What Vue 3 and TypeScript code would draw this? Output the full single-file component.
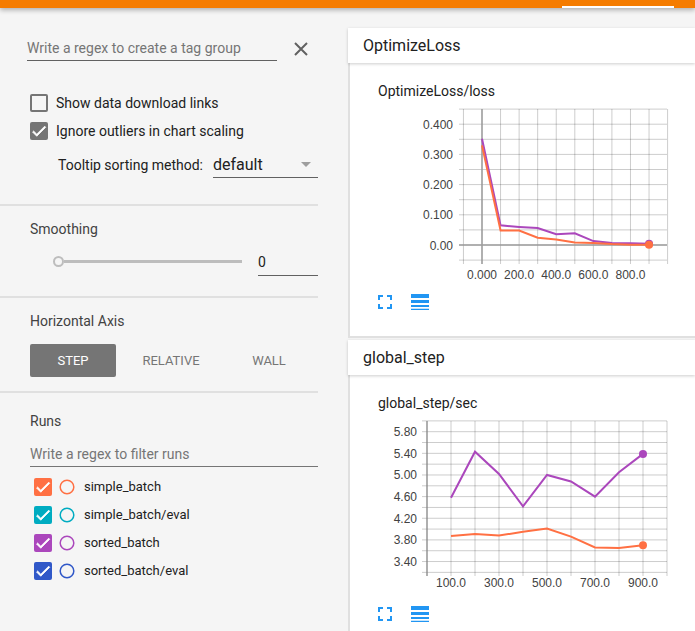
<script setup lang="ts">
interface Series { color: string; values: number[] }
interface Chart {
  x0: number; xStep: number; xFirst: number; xLabelY: number
  y0: number; yUnit: number; yFirst: number; yCount: number; yDelta: number; yZero: number
  gridLeft: number; tickBottom: number; labelRight: number; stepStart: number; dot: number
  xLabel: (step: number) => string
  yLabel: (v: number) => string
  series: Series[]
}

const tab = 'STEP'
const tabs = ['STEP', 'RELATIVE', 'WALL']
const runs = [
  { name: 'simple_batch', color: '#ff7043' },
  { name: 'simple_batch/eval', color: '#00acc1' },
  { name: 'sorted_batch', color: '#ab47bc' },
  { name: 'sorted_batch/eval', color: '#3058c8' },
]

const lossChart: Chart = {
  x0: 72, xStep: 18.56, xFirst: -100, xLabelY: 174,
  y0: 140, yUnit: 302, yFirst: -0.05, yCount: 11, yDelta: 0.05, yZero: 0,
  gridLeft: 49, tickBottom: 159, labelRight: 43, stepStart: 0, dot: 4,
  xLabel: s => (s < 0 || s > 800 || s % 200 !== 0 ? '' : s === 0 ? '0.000' : s.toFixed(1)),
  yLabel: v => {
    const n = Math.round(v * 100)
    if (n < 0 || n > 40 || n % 10 !== 0) return ''
    return n === 0 ? '0.00' : (n / 100).toFixed(3)
  },
  series: [
    { color: '#ab47bc', values: [0.352, 0.065, 0.06, 0.056, 0.036, 0.039, 0.013, 0.007, 0.006, 0.004] },
    { color: '#ff7043', values: [0.33, 0.048, 0.048, 0.024, 0.018, 0.008, 0.007, 0.003, 0.001, 0.001] },
  ],
}

const stepChart: Chart = {
  x0: 17, xStep: 24, xFirst: 0, xLabelY: 170,
  y0: 14.7, yUnit: 54.1, yFirst: 3.2, yCount: 15, yDelta: 0.2, yZero: 5.8,
  gridLeft: 12, tickBottom: 159, labelRight: 7, stepStart: 100, dot: 4,
  xLabel: s => (s % 200 === 100 ? s.toFixed(1) : ''),
  yLabel: v => (Math.round(v * 10) % 4 === 2 ? v.toFixed(2) : ''),
  series: [
    { color: '#ab47bc', values: [4.58, 5.43, 5.02, 4.42, 5.0, 4.88, 4.6, 5.05, 5.39] },
    { color: '#ff7043', values: [3.87, 3.91, 3.88, 3.95, 4.01, 3.86, 3.66, 3.65, 3.7] },
  ],
}

const sections = [
  { name: 'OptimizeLoss', title: 'OptimizeLoss/loss', chart: lossChart, zeroAxis: true },
  { name: 'global_step', title: 'global_step/sec', chart: stepChart, zeroAxis: false },
]

function px(c: Chart, step: number) {
  return c.x0 + (step / 100) * c.xStep
}
function py(c: Chart, v: number) {
  return c.y0 - (v - c.yZero) * c.yUnit
}
function xTicks(c: Chart) {
  const out: number[] = []
  for (let s = c.xFirst; s <= 1000; s += 100) out.push(s)
  return out
}
function yTicks(c: Chart) {
  return Array.from({ length: c.yCount }, (_, i) => c.yFirst + i * c.yDelta)
}
function line(c: Chart, s: Series) {
  return s.values.map((v, i) => `${px(c, c.stepStart + i * 100)},${py(c, v)}`).join(' ')
}
function lastX(c: Chart, s: Series) {
  return px(c, c.stepStart + (s.values.length - 1) * 100)
}
function lastY(c: Chart, s: Series) {
  return py(c, s.values[s.values.length - 1])
}
</script>

<template>
  <div class="page">
    <header class="topbar"><span class="tab-mark"></span></header>
    <div class="body">
      <aside class="sidebar">
        <section class="side-top">
          <div class="tag-row">
            <div class="tag-input">Write a regex to create a tag group</div>
            <svg class="close" width="14" height="14" viewBox="0 0 14 14">
              <path d="M1 1L13 13M13 1L1 13" stroke="#616161" stroke-width="2" fill="none" />
            </svg>
          </div>
          <label class="check-row first">
            <span class="box"></span>
            <span>Show data download links</span>
          </label>
          <label class="check-row">
            <span class="box on">
              <svg width="18" height="18" viewBox="0 0 24 24"><path d="M9 16.17L4.83 12l-1.42 1.41L9 19 21 7l-1.41-1.41z" fill="#fff" stroke="#fff" /></svg>
            </span>
            <span>Ignore outliers in chart scaling</span>
          </label>
          <div class="sort-row">
            <span>Tooltip sorting method:</span>
            <div class="select">default<i class="caret"></i></div>
          </div>
        </section>

        <section class="side-smooth">
          <h3>Smoothing</h3>
          <div class="slider-row">
            <div class="slider"><span class="thumb"></span><span class="track"></span></div>
            <div class="slider-value">0</div>
          </div>
        </section>

        <section class="side-axis">
          <h3>Horizontal Axis</h3>
          <div class="axis-tabs">
            <button v-for="t in tabs" :key="t" :class="{ active: t === tab }">{{ t }}</button>
          </div>
        </section>

        <section class="side-runs">
          <h3>Runs</h3>
          <div class="run-filter">Write a regex to filter runs</div>
          <div v-for="r in runs" :key="r.name" class="run">
            <span class="run-box" :style="{ background: r.color }">
              <svg width="18" height="18" viewBox="0 0 24 24"><path d="M9 16.17L4.83 12l-1.42 1.41L9 19 21 7l-1.41-1.41z" fill="#fff" stroke="#fff" /></svg>
            </span>
            <svg class="run-dot" width="16" height="16" viewBox="0 0 16 16">
              <circle cx="8" cy="8" r="6.8" fill="none" :stroke="r.color" stroke-width="1.5" />
            </svg>
            <span class="run-name">{{ r.name }}</span>
          </div>
        </section>
      </aside>

      <main class="main">
        <section v-for="s in sections" :key="s.name" class="group">
          <div class="group-head">{{ s.name }}</div>
          <div class="card">
            <div class="card-title">{{ s.title }}</div>
            <svg class="chart" width="270" height="182" viewBox="0 0 270 182">
              <g stroke="#000" stroke-opacity="0.2" fill="none">
                <line v-for="t in xTicks(s.chart)" :key="t" :x1="px(s.chart, t)" :x2="px(s.chart, t)" y1="4" :y2="s.chart.tickBottom" />
                <line v-for="v in yTicks(s.chart)" :key="v" :x1="s.chart.gridLeft" x2="257" :y1="py(s.chart, v)" :y2="py(s.chart, v)" />
              </g>
              <g v-if="s.zeroAxis" stroke="#9e9e9e" stroke-width="1.5">
                <line :x1="px(s.chart, 0)" :x2="px(s.chart, 0)" y1="4" :y2="s.chart.tickBottom" />
                <line :x1="s.chart.gridLeft" x2="257" :y1="py(s.chart, 0)" :y2="py(s.chart, 0)" />
              </g>
              <line v-else :x1="px(s.chart, 0)" :x2="px(s.chart, 0)" y1="4" :y2="s.chart.tickBottom" stroke="#8a8a8a" stroke-width="1.2" />
              <g class="labels">
                <text v-for="v in yTicks(s.chart)" :key="v" :x="s.chart.labelRight" :y="py(s.chart, v) + 4.5" text-anchor="end">{{ s.chart.yLabel(v) }}</text>
                <text v-for="t in xTicks(s.chart)" :key="t" :x="px(s.chart, t)" :y="s.chart.xLabelY" text-anchor="middle">{{ s.chart.xLabel(t) }}</text>
              </g>
              <g v-for="r in s.chart.series" :key="r.color">
                <polyline :points="line(s.chart, r)" fill="none" :stroke="r.color" stroke-width="2" />
                <circle :cx="lastX(s.chart, r)" :cy="lastY(s.chart, r)" :r="s.chart.dot" :fill="r.color" />
              </g>
            </svg>
            <div class="tools">
              <svg width="24" height="24" viewBox="0 0 24 24">
                <path d="M7 14H5v5h5v-2H7v-3zm-2-4h2V7h3V5H5v5zm12 7h-3v2h5v-5h-2v3zM14 5v2h3v3h2V5h-5z" fill="#2196f3" />
              </svg>
              <svg class="list" width="18" height="16" viewBox="0 0 18 16">
                <path d="M0 0h18v4H0zM0 6h18v3H0zM0 11h18v2H0zM0 14.7h18V16H0z" fill="#2196f3" />
              </svg>
            </div>
          </div>
        </section>
      </main>
    </div>
  </div>
</template>

<style>
html, body { margin: 0; height: 100%; overflow: hidden; background: #f5f5f5; }
</style>

<style scoped>
.page { height: 631px; overflow: hidden; display: flex; flex-direction: column; font-family: Roboto, "Noto Sans", sans-serif; color: #212121; font-size: 14px; }
.topbar { position: relative; z-index: 2; flex: none; height: 8px; background: #f57c00; box-shadow: 0 2px 5px rgba(0, 0, 0, 0.3); }
.tab-mark { position: absolute; left: 562px; width: 112px; top: 6px; height: 2px; background: #fff; }
.body { flex: 1; display: flex; min-height: 0; }

.sidebar { flex: none; width: 348px; background: #f5f5f5; display: flex; flex-direction: column; }
.sidebar section { margin-right: 30px; border-bottom: 2px solid #e0e0e0; box-sizing: border-box; }
.sidebar h3 { margin: 0; font-size: 14px; font-weight: 400; color: #424242; line-height: 18px; padding-left: 30px; }

.side-top { height: 198px; }
.tag-row { display: flex; align-items: center; padding: 28px 0 0 27px; }
.tag-input { width: 250px; height: 24px; line-height: 24px; border-bottom: 1px solid #616161; color: #757575; font-size: 14px; box-sizing: content-box; }
.close { margin: 0 0 0 17px; }
.check-row { display: flex; align-items: center; gap: 8px; padding-left: 30px; height: 18px; margin-top: 10px; color: #212121; }
.check-row.first { margin-top: 33px; }
.box { width: 18px; height: 18px; box-sizing: border-box; border: 2px solid #757575; border-radius: 2px; display: block; }
.box.on { border: none; background: #757575; }
.box svg { display: block; }
.sort-row { display: flex; align-items: flex-end; padding: 10px 0 0 58px; color: #212121; }
.sort-row > span { line-height: 26px; }
.select { position: relative; width: 105px; height: 27px; margin-left: 10px; border-bottom: 1px solid #616161; font-size: 16px; line-height: 30px; }
.caret { position: absolute; right: 7px; top: 12px; border: 5px solid transparent; border-bottom: none; border-top-color: #9e9e9e; }

.side-smooth { height: 92px; padding-top: 14px; }
.slider-row { display: flex; align-items: flex-end; padding-left: 53px; margin-top: 8px; }
.slider { position: relative; width: 189px; height: 30px; display: flex; align-items: center; }
.thumb { width: 11px; height: 11px; box-sizing: border-box; border: 2px solid #bdbdbd; border-radius: 50%; flex: none; }
.track { flex: 1; height: 3px; background: #bdbdbd; }
.slider-value { margin-left: 16px; width: 60px; height: 24px; line-height: 22px; border-bottom: 1px solid #616161; font-size: 14px; }

.side-axis { height: 95px; padding-top: 14px; }
.axis-tabs { display: flex; gap: 12px; padding-left: 30px; margin-top: 14px; }
.axis-tabs button { width: 86px; height: 33px; padding: 0; border: none; border-radius: 2px; background: transparent; color: #757575; font: 400 13px Roboto, sans-serif; }
.axis-tabs button.active { background: #757575; color: #fff; }

.sidebar .side-runs { border-bottom: none; padding-top: 19px; }
.run-filter { margin: 13px 0 11px 30px; height: 23px; line-height: 23px; border-bottom: 1px solid #757575; color: #757575; font-size: 14px; }
.run { display: flex; align-items: center; height: 18px; margin: 0 0 10px 34px; }
.run-box { width: 18px; height: 18px; border-radius: 2px; flex: none; }
.run-box svg { display: block; }
.run-dot { margin-left: 7px; flex: none; }
.run-name { margin-left: 9px; font-size: 13px; color: #212121; position: relative; top: -1px; }

.main { flex: 1; min-width: 0; padding-top: 20px; display: flex; flex-direction: column; gap: 2px; }
.group-head { height: 35px; line-height: 35px; padding-left: 15px; background: #fff; font-size: 16px; color: #212121; box-shadow: 0 1px 3px rgba(0, 0, 0, 0.2); position: relative; z-index: 1; }
.card { height: 275px; background: #fff; border-left: 2px solid #e0e0e0; border-bottom: 2px solid #e0e0e0; box-sizing: border-box; padding: 20px 0 0 28px; }
.card-title { font-size: 14px; line-height: 17px; color: #212121; }
.chart { display: block; margin: 5px 0 0 32px; height: 182px; overflow: visible; }
.labels { font: 12px "Liberation Sans", Arial, sans-serif; fill: #424242; }
.tools { display: flex; align-items: center; margin: 3px 0 0 -5px; }
.tools .list { margin-left: 14px; }
</style>
